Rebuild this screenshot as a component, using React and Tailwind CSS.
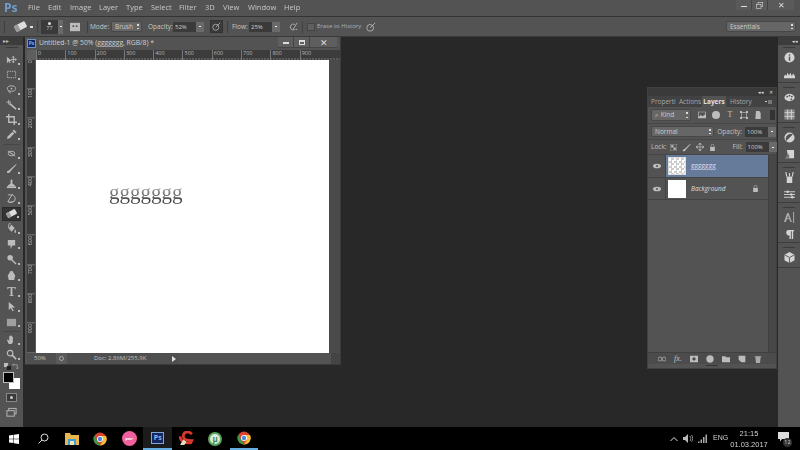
const I = ({ s = 11, children, cls = '' }) => (
  <svg width={s} height={s} viewBox="0 0 12 12" className={`shrink-0 ${cls}`} fill="#bcbcbc" stroke="none">{children}</svg>
);

const line = { fill: 'none', stroke: '#bcbcbc', strokeWidth: 1 };

const eraser = (
  <g transform="rotate(-28 6 6)">
    <rect x="0.500" y="3" width="11" height="6" rx="1.200" fill="#dedede" />
    <rect x="0.500" y="3" width="4" height="6" rx="1.200" fill="#9a9a9a" />
  </g>
);

const tools = [
  [<><path d="M1 3v7l2-2 1 2 1-.5-1-2h2.500z" /><path d="M8 3v6M5.500 6H11M8 2.500l-1 1h2zM8 9.500l-1-1h2zM11.500 6l-1-1v2z" {...line} /></>, 15],
  [<rect x="1.500" y="2.500" width="9" height="7" {...line} strokeDasharray="1.500 1" />, 15],
  [<><ellipse cx="6" cy="5" rx="4.500" ry="3" {...line} /><path d="M3 7c0 2 1 3 2 3" {...line} /><circle cx="6" cy="5" r="1" /></>, 15],
  [<><path d="M4 5l7 6" stroke="#bcbcbc" strokeWidth="1.800" /><path d="M3 1v5M.5 3.500h5" {...line} /></>, 15],
  [<path d="M3 0v9h9M0 3h9v9" {...line} strokeWidth="1.500" />, 15],
  [<><path d="M1 11l1-3 5-5 2 2-5 5z" /><path d="M7 2l1.500-1.500 3 3L10 5z" /></>, 15],
];

const tools1 = [
  [<><path d="M2 3l8 6" stroke="#bcbcbc" strokeWidth="1" /><ellipse cx="6" cy="6" rx="3.500" ry="2.500" {...line} /><circle cx="6" cy="6" r=".8" /></>, 15],
  [<><path d="M1 11c0-2 1-3 2.500-3L11 1l.5.5L5 9c0 1.500-2 2-4 2z" /></>, 15],
  [<><rect x="1" y="9" width="10" height="2" /><path d="M2 9c0-2 2-1.500 3-3V2.500a1 1 0 0 1 2 0V6c1 1.500 3 1 3 3z" /></>, 15],
  [<><path d="M2 2h3c4 0 5 2 5 4.500S8 10 5 10H3M7 1L2 9.500c2 1 5 1 7-1" {...line} /></>, 15],
];

const tools2 = [
  [<><path d="M3 6l3-4 3.500 3.500-3.500 4z" /><path d="M5 1.500a1 1 0 0 0-2 0V6" {...line} /><path d="M10 7c1 1.500 1.500 2.500.5 3.500S9 10 9.500 7z" /></>, 15],
  [<path d="M2 1h8v6H7l-2 4V7H2z" />, 16],
  [<><circle cx="4.500" cy="4" r="3" /><path d="M6 6l5 5" stroke="#bcbcbc" strokeWidth="1.500" /></>, 15],
  [<path d="M3 11L2 6l3-5h2l3 5-1 5z" />, 17],
  [<path d="M1.500 1h9v2.500h-.7L9 2H7v8l1.500.4v.6h-5v-.6L5 10V2H3l-.8 1.500H1.500z" />, 15],
  [<path d="M3 1l7 6H6.500l2 3.500-1.300.7-2-3.500L3 10z" />, 15],
  [<rect x="1" y="2" width="10" height="8" fill="#a0a0a0" />, 16],
];

const tools3 = [
  [<path d="M3 11L1 6.500l1-.5 1.500 1.500V2.500l1 0V5.500V1.500h1V5.500V2h1V5.500V3h1v5c0 1.500-1 3-2 3z" />, 15],
  [<><circle cx="4.500" cy="4.500" r="3" {...line} strokeWidth="1.300" /><path d="M6.500 6.500L11 11" stroke="#bcbcbc" strokeWidth="1.800" /></>, 15],
];

const dock = [
  [<><circle cx="6" cy="6" r="5.500" fill="#d4d4d4" /><rect x="5.200" y="2.500" width="1.600" height="1.500" fill="#535353" /><rect x="5.200" y="5" width="1.600" height="4.500" fill="#535353" /></>,
   <path d="M0 10V8l1.500-2 1 1.500L4 4l1.500 3L7 4l1.500 3.500L10 5l2 3v2z" fill="#d4d4d4" />],
  [<><ellipse cx="6" cy="6" rx="5.500" ry="4" fill="#d4d4d4" /><circle cx="3.500" cy="5" r="1" fill="#535353" /><circle cx="6" cy="4" r="1" fill="#535353" /><circle cx="8.500" cy="5" r="1" fill="#535353" /><circle cx="8" cy="8" r="1" fill="#535353" /></>,
   <><rect x=".5" y=".5" width="11" height="11" fill="#8a8a8a" /><path d="M4 .5v11M8 .5v11M.5 4h11M.5 8h11" stroke="#d4d4d4" strokeWidth="1" fill="none" /></>],
  [<><circle cx="6" cy="6" r="5.500" fill="#d4d4d4" /><path d="M2.500 9.800L9.800 2.500A5.500 5.500 0 0 0 2.500 9.800z" fill="#535353" /></>,
   <><path d="M3 1h8v9H5z" fill="#d4d4d4" /><path d="M1 11l3-6 2 2-1 4z" fill="#777" /></>],
  [<><path d="M3 5h6v7H3z" fill="#d4d4d4" /><path d="M3 5L2 0M6 5V1M9 5l1-5" stroke="#d4d4d4" strokeWidth="1.200" fill="none" /></>,
   <><path d="M0 3h12M0 6h12M0 9h12" stroke="#d4d4d4" strokeWidth="1" /><circle cx="4" cy="3" r="1.300" fill="#d4d4d4" /><circle cx="8" cy="6" r="1.300" fill="#d4d4d4" /><circle cx="9" cy="9" r="1.300" fill="#d4d4d4" /></>],
  [<><path d="M0 11L3.500 1h1.500L8.500 11H7L6 8H3l-1 3zM3.400 7h2.200L4.500 3.500z" fill="#b0b0b0" /><rect x="10" y="0" width="1" height="12" fill="#b0b0b0" /></>,
   <path d="M5 1h6v1.500H10V11H8.500V2.500H7.500V11H6V7a3 3 0 0 1-1-6z" fill="#d4d4d4" />],
  [<><path d="M6 0l5.500 3v6L6 12 .5 9V3z" fill="#d4d4d4" /><path d="M.5 3L6 6l5.500-3M6 6v6" stroke="#535353" fill="none" /></>],
];

const rulerTicks = 'bg-[repeating-linear-gradient(90deg,#777_0_1px,transparent_1px_3px)]';

function Tool({ icon, h, active }) {
  return (
    <div style={{ height: h }} className="relative flex items-center justify-center">
      <div className={`relative flex items-center justify-center w-[19px] h-[14px] ${active ? 'bg-[#343434] border border-[#2a2a2a]' : ''}`}>
        <I>{icon}</I>
        <span className="absolute right-[1px] bottom-[2px] w-[2px] h-[2px] bg-[#bcbcbc]" />
      </div>
    </div>
  );
}

function Toolbar() {
  return (
    <div className="w-[23px] shrink-0 bg-[#535353] flex flex-col">
      <div className="h-[8px] bg-[#3c3c3c] text-[6px] leading-[8px] pl-[3px] text-[#bbb]">▸▸</div>
      <div className="h-[1px] w-[12px] mx-auto mt-[2px] mb-[4px] bg-[#3a3a3a]" />
      <div className="flex flex-col">
        {tools.map(([icon, h], i) => <Tool key={i} icon={icon} h={h} />)}
        <div className="h-[1px] w-[17px] mx-auto my-[1.500px] bg-[#464646]" />
        {tools1.map(([icon, h], i) => <Tool key={i} icon={icon} h={h} />)}
        <Tool icon={eraser} h={15} active />
        {tools2.map(([icon, h], i) => <Tool key={i} icon={icon} h={h} />)}
        <div className="h-[1px] w-[17px] mx-auto my-[.500px] bg-[#464646]" />
        {tools3.map(([icon, h], i) => <Tool key={i} icon={icon} h={h} />)}
      </div>
      <div className="flex justify-between px-[4px] h-[9px] items-center">
        <I s={7}><rect x="0" y="0" width="7" height="7" /><rect x="5" y="5" width="7" height="7" fill="#222" /></I>
        <I s={7}><path d="M1 3h8v7M3 1L1 3l2 2M7 8l2 2 2-2" {...line} /></I>
      </div>
      <div className="relative h-[19px] mt-[1px]">
        <div className="absolute left-[9px] top-[6px] w-[11px] h-[11px] bg-white" />
        <div className="absolute left-[3px] top-0 w-[11px] h-[11px] bg-black border border-[#bbb]" />
      </div>
      <div className="mt-[2px] flex justify-center">
        <div className="w-[11px] h-[9px] bg-[#3a3a3a] border border-[#888] flex items-center justify-center">
          <div className="w-[3px] h-[3px] rounded-full bg-[#ccc]" />
        </div>
      </div>
      <div className="mt-[5px] flex justify-center">
        <I><rect x="3" y="1.500" width="8" height="6" {...line} /><rect x="1" y="4" width="8" height="6" fill="#535353" stroke="#bcbcbc" /></I>
      </div>
    </div>
  );
}

function DocWindow() {
  const labels = [0, 100, 200, 300, 400, 500, 600, 700, 800, 900];
  return (
    <div className="absolute left-[25px] top-0 w-[316px] h-[328px] bg-[#535353] border-r border-b border-[#3a3a3a] flex flex-col">
      <div className="h-[13px] shrink-0 flex items-center pl-[2px] relative">
        <div className="w-[9px] h-[9px] bg-[#14265e] border border-[#6f93cc] text-[5px] leading-[7px] text-center font-bold text-[#7fb0e8]">Ps</div>
        <span className="ml-[3px] text-[6.800px] text-[#d0d0d0] whitespace-nowrap">Untitled-1 @ 50% (ggggggg, RGB/8) *</span>
        <div className="absolute right-[3px] top-0 h-[11px] flex bg-[#5e5e5e] border-b border-[#444]">
          <div className="w-[16px] flex items-center justify-center border-r border-[#444]"><div className="w-[6px] h-[2px] mt-[2px] bg-[#ddd]" /></div>
          <div className="w-[16px] flex items-center justify-center border-r border-[#444]"><div className="w-[6px] h-[5px] border border-[#ddd] border-t-2" /></div>
          <div className="w-[27px] flex items-center justify-center text-[#ddd] text-[9px] leading-none">✕</div>
        </div>
      </div>
      <div className="flex flex-1 min-h-0 ml-[2px]">
        <div className="flex-1 flex flex-col min-w-0">
          <div className="h-[10px] flex shrink-0 bg-[#3c3c3c]">
            <div className="w-[9px] bg-[#5e5e5e] shrink-0" />
            <div className={`flex flex-1 relative ${rulerTicks} bg-[length:3px_2px] bg-bottom bg-repeat-x overflow-hidden`}>
              {labels.map((n) => (
                <div key={n} className="w-[29.300px] shrink-0 h-full border-l border-[#777] text-[5.500px] leading-[7px] pl-[1px] text-[#b8b8b8]">{n}</div>
              ))}
            </div>
          </div>
          <div className="flex h-[293px] shrink-0">
            <div className="w-[9px] bg-[#3c3c3c] shrink-0 flex flex-col overflow-hidden border-r border-[#5a5a5a]">
              {labels.map((n) => (
                <div key={n} className="h-[29.300px] shrink-0 border-t border-[#777] text-[5.500px] leading-[7px] text-[#b8b8b8] [writing-mode:vertical-rl] rotate-180 text-right">{n}</div>
              ))}
            </div>
            <div className="w-[293px] shrink-0 bg-white relative">
              <span className="absolute left-[73px] top-[120px] text-[21px] leading-[24px] font-['Liberation_Serif',serif] text-transparent bg-clip-text bg-[linear-gradient(180deg,#bbb_25%,#777_55%,#444_85%)]">ggggggg</span>
            </div>
            <div className="flex-1 bg-[#4a4a4a]" />
          </div>
          <div className="h-[11px] flex items-center text-[6px] text-[#c0c0c0] bg-[#4f4f4f]">
            <span className="w-[27px] pl-[7px]">50%</span>
            <div className="w-[11px] h-[11px] ml-[2px] bg-[#5a5a5a] flex items-center justify-center"><div className="w-[5px] h-[5px] rounded-full border border-[#aaa]" /></div>
            <span className="ml-[27px] w-[78px] whitespace-nowrap">Doc: 2,86M/255,9K</span>
            <span className="w-0 h-0 border-y-[3px] border-y-transparent border-l-[4px] border-l-[#e0e0e0]" />
            <div className="flex-1 h-full ml-[3px] bg-[#535353]" />
            <div className="w-[9px] h-full bg-[#444]" />
          </div>
        </div>
      </div>
    </div>
  );
}

const Field = ({ w, v }) => (
  <div className="flex h-[10px]">
    <div style={{ width: w }} className="bg-[#3a3a3a] text-[6px] leading-[10px] px-[2px] text-[#cfcfcf]">{v}</div>
    <div className="w-[8px] bg-[#6a6a6a] flex items-center justify-center"><div className="w-[2px] h-[1px] bg-[#eee]" /></div>
  </div>
);

const Select = ({ cls, v }) => (
  <div className={`relative h-[11px] bg-[#666] rounded-[2px] border border-[#474747] leading-[9px] pl-[3px] text-[#ccc] ${cls}`}>
    {v}
    <span className="absolute right-[2px] top-[2px] w-[2px] h-[1.500px] bg-[#ddd]" />
    <span className="absolute right-[2px] bottom-[2px] w-[2px] h-[1.500px] bg-[#ddd]" />
  </div>
);

const Eye = () => <I s={8}><ellipse cx="6" cy="6" rx="6" ry="3.500" /><circle cx="6" cy="6" r="1.500" fill="#535353" /></I>;

function LayersPanel() {
  const cell = 'w-[16px] shrink-0 flex justify-center';
  return (
    <div className="absolute left-[647px] top-[50px] w-[130px] h-[282px] bg-[#535353] border border-[#404040] flex flex-col text-[#c4c4c4]">
      <div className="h-[8px] shrink-0 bg-[#3a3a3a] flex justify-end items-center gap-[5px] pr-[3px] text-[5px] leading-none text-[#ddd]"><span>◂◂</span><span>✕</span></div>
      <div className="h-[11px] shrink-0 flex bg-[#424242] text-[6.500px] leading-[11px]">
        <div className="w-[28px] pl-[3px] overflow-hidden whitespace-nowrap text-[#a8a8a8]">Properties</div>
        <div className="w-[26px] pl-[3px] text-[#a8a8a8]">Actions</div>
        <div className="w-[24px] bg-[#535353] text-center font-bold text-[#e0e0e0]">Layers</div>
        <div className="w-[28px] pl-[4px] text-[#a8a8a8]">History</div>
        <div className="flex-1 flex justify-end items-center gap-[1px] pr-[4px]"><div className="w-[2px] h-[1px] bg-[#ccc]" /><div className="w-[4px] h-[4px] bg-[#777]" /></div>
      </div>
      <div className="h-[16px] shrink-0 flex items-center pl-[3px]">
        <Select cls="w-[40px] h-[12px] text-[6.500px] !leading-[10px]" v="⌕ Kind" />
        <div className="flex items-center ml-[3px]">
          <div className={cell}><I s={8}><path fillRule="evenodd" d="M0 1h12v10H0zM1 2v7l3-3 3 2 4-3V2z" /></I></div>
          <div className={`${cell} -ml-[2px]`}><I s={8}><circle cx="6" cy="6" r="6" /></I></div>
          <div className={`${cell} -ml-[2px] text-[8px] leading-none font-['Liberation_Serif',serif]`}>T</div>
          <div className={`${cell} -ml-[2px]`}><I s={8}><rect x="2" y="2" width="8" height="8" {...line} /><path d="M0 0h3v3H0zM9 0h3v3H9zM0 9h3v3H0zM9 9h3v3H9z" /></I></div>
          <div className={`${cell} -ml-[2px]`}><I s={8}><path d="M3 0h5l2 3v9H2z" /></I></div>
        </div>
        <div className="w-[5px] h-[10px] bg-[#333] ml-[4px]" />
      </div>
      <div className="h-[16px] shrink-0 flex items-center pl-[3px] border-t border-[#464646]">
        <Select cls="w-[65px] text-[6.500px]" v="Normal" />
        <span className="ml-[3px] mr-[3px] text-[6.500px]">Opacity:</span>
        <Field w={23} v="100%" />
      </div>
      <div className="h-[16px] shrink-0 flex items-center pl-[3px] border-y border-[#464646] text-[6.500px]">
        <span>Lock:</span>
        <div className="flex gap-[5px] ml-[3px] items-center">
          <I s={7}><rect x="0" y="0" width="12" height="12" {...line} /><rect x="2" y="2" width="4" height="4" /><rect x="6" y="6" width="4" height="4" /></I>
          <I s={9}><path d="M1 11c0-2 1-3 2.500-3L11 1l.5.5L5 9c0 1.500-2 2-4 2z" /></I>
          <I s={8}><path d="M6 0v12M0 6h12M6 0L4 2h4zM6 12l-2-2h4zM0 6l2-2v4zM12 6l-2-2v4z" {...line} /></I>
          <I s={7}><rect x="2" y="5" width="8" height="7" /><path d="M3.500 5V3a2.500 2.500 0 0 1 5 0v2" {...line} /></I>
        </div>
        <span className="ml-[17px] mr-[3px]">Fill:</span>
        <Field w={23} v="100%" />
      </div>
      <div className="flex flex-1 min-h-0">
        <div className="flex-1 flex flex-col">
          <div className="h-[23px] flex bg-[#667b9a] border-b border-[#444]">
            <div className="w-[18px] flex items-center justify-center bg-[#535353] border-r border-[#444]"><Eye /></div>
            <div className="w-[18px] h-[18px] ml-[2px] my-auto border border-[#ddd] bg-[repeating-conic-gradient(#ccc_0_25%,#fff_0_50%)] bg-[length:5px_5px]" />
            <span className="ml-[5px] my-auto text-[6.500px] text-[#dde]">ggggggg</span>
          </div>
          <div className="h-[22px] flex items-center border-b border-[#444]">
            <div className="w-[18px] h-full flex items-center justify-center border-r border-[#444]"><Eye /></div>
            <div className="w-[18px] h-[18px] ml-[2px] bg-white" />
            <span className="ml-[5px] text-[6.500px] italic text-[#ddd]">Background</span>
            <I s={7} cls="ml-[26px]"><rect x="2" y="5" width="8" height="7" /><path d="M3.500 5V3a2.500 2.500 0 0 1 5 0v2" {...line} /></I>
          </div>
        </div>
        <div className="w-[8px] bg-[#474747] border-l border-[#404040]" />
      </div>
      <div className="h-[12px] shrink-0 flex items-center pl-[6px] bg-[#4c4c4c] border-t border-[#404040]">
        <div className={cell}><I s={8}><rect x="0" y="3" width="6" height="6" rx="3" {...line} /><rect x="6" y="3" width="6" height="6" rx="3" {...line} /></I></div>
        <div className={`${cell} font-['Liberation_Serif',serif] italic text-[8px] leading-none`}>fx.</div>
        <div className={cell}><I s={8}><path fillRule="evenodd" d="M0 1h12v10H0zM6 3.500a2.500 2.500 0 1 0 .001 0z" /></I></div>
        <div className={cell}><I s={8}><circle cx="6" cy="6" r="5.500" /></I></div>
        <div className={cell}><I s={8}><path d="M0 2h5l1 1.500h6V11H0z" /></I></div>
        <div className={cell}><I s={8}><path d="M1 1h10v10H5L1 7z" /></I></div>
        <div className={cell}><I s={8}><path d="M2 3h8l-1 9H3zM1 1.500h10v1H1z" fill="#aaa" /></I></div>
      </div>
      <div className="h-[4px] shrink-0 bg-[#535353] flex justify-center"><div className="w-[12px] h-[1px] bg-[#333] mt-[1px]" /></div>
    </div>
  );
}

function Dock() {
  return (
    <div className="w-[22px] shrink-0 bg-[#535353] flex flex-col">
      <div className="h-[8px] bg-[#3c3c3c] text-[5px] leading-[8px] text-right pr-[2px] text-[#ddd]">◂◂</div>
      {dock.map((group, i) => (
        <div key={i} className={`flex flex-col items-center border-b border-[#3e3e3e] ${i === 0 ? 'h-[38px] pt-[2px]' : 'pt-[4px]'} ${i > 0 && group.length === 2 ? 'h-[40px]' : ''} ${group.length === 1 ? 'h-[25px]' : ''}`}>
          <div className="w-[12px] h-[1px] bg-[#3a3a3a] mb-[4px]" />
          <div className="flex flex-col gap-[6px]">
            {group.map((icon, j) => <I key={j}>{icon}</I>)}
          </div>
        </div>
      ))}
    </div>
  );
}

const Chrome = () => (
  <svg width="14" height="14" viewBox="0 0 14 14" className="shrink-0">
    <circle cx="7" cy="7" r="6.500" fill="#d9432f" />
    <path d="M1.400 3.800L4.300 9 7 13.500A6.500 6.500 0 0 1 1.400 3.800z" fill="#3a9a46" />
    <path d="M7 4h6a6.500 6.500 0 0 1-6 9.500L9.800 9z" fill="#f2c031" />
    <circle cx="7" cy="7" r="3" fill="#fff" />
    <circle cx="7" cy="7" r="2.200" fill="#4a88e0" />
  </svg>
);

function Taskbar() {
  const cell = 'w-[28.700px] h-full shrink-0 flex items-center justify-center';
  return (
    <div className="h-[23px] shrink-0 bg-black flex items-center relative text-[#d0d0d0]">
      <div className={cell}>
        <svg width="10" height="10" viewBox="0 0 10 10" fill="#fff"><path d="M0 1.500L4.500.8v3.900H0zM5 .7L10 0v4.700H5zM0 5.200h4.500v3.900L0 8.500zM5 5.200h5V10l-5-.7z" /></svg>
      </div>
      <div className={cell}>
        <svg width="11" height="11" viewBox="0 0 11 11" fill="none" stroke="#ddd"><circle cx="6.500" cy="4.500" r="3.500" /><path d="M4 7l-3.500 3.500" /></svg>
      </div>
      <div className={cell}>
        <svg width="14" height="12" viewBox="0 0 14 12"><path d="M0 0h5l1 2h8v10H0z" fill="#e6b84c" /><rect x="3" y="6" width="8" height="6" fill="#3f9ad8" /><rect x="5" y="8" width="4" height="4" fill="#f4e3a6" /></svg>
      </div>
      <div className={cell}><Chrome /></div>
      <div className={cell}>
        <div className="w-[15px] h-[15px] rounded-full bg-[#f0609c] text-[4px] leading-[15px] text-center text-white font-bold">pwr</div>
      </div>
      <div className={`${cell} bg-[#1c1c1c] border-b-2 border-[#66aee0]`}>
        <div className="w-[13px] h-[12px] bg-[#14265e] border border-[#7fa6dc] text-[7px] leading-[10px] text-center font-bold text-[#8dbcf0]">Ps</div>
      </div>
      <div className={cell}>
        <svg width="15" height="15" viewBox="0 0 14 14"><path d="M12 3C9-.5 4 .5 4 5c0 3 3 4 8 4l-1 2c-6 1-10-2-10-6" fill="none" stroke="#d9382c" strokeWidth="2.500" /><path d="M1 13l3-5 3 2-2 3z" fill="#e8dcc0" /></svg>
      </div>
      <div className={cell}>
        <div className="w-[14px] h-[14px] rounded-full bg-[#dfe8df] border-2 border-[#58a55c] text-[8px] leading-[10px] text-center font-bold text-[#3a8a44]">µ</div>
      </div>
      <div className={`${cell} border-b-2 border-[#66aee0]`}><Chrome /></div>

      <div className="ml-auto flex items-center h-full">
        <svg width="8" height="6" viewBox="0 0 8 6" fill="none" stroke="#ddd"><path d="M.5 5L4 1.500 7.500 5" /></svg>
        <svg width="10" height="9" viewBox="0 0 10 9" className="ml-[5px]"><path d="M0 3h2l3-3v9L2 6H0z" fill="#bbb" /><path d="M7 2c1 1.500 1 3.500 0 5M8.500 1c1.500 2 1.500 5 0 7" stroke="#888" fill="none" /></svg>
        <svg width="9" height="9" viewBox="0 0 9 9" fill="#aaa" className="ml-[5px]"><path d="M0 9V7.500h1.500V9zM2.500 9V5.500H4V9zM5 9V3h1.500v6zM7.500 9V.5H9V9z" /></svg>
        <span className="ml-[6px] text-[7px] w-[16px] font-['Liberation_Sans',sans-serif]">ENG</span>
        <div className="w-[40px] text-center text-[7.500px] leading-[11px] font-['Liberation_Sans',sans-serif]">
          <div>21:15</div>
          <div>01.03.2017</div>
        </div>
        <div className="relative w-[20px] h-full ml-[4px] mr-[7px] flex items-center justify-center">
          <svg width="11" height="10" viewBox="0 0 11 10" fill="#ddd" className="-mt-[3px]"><path d="M0 0h11v7H4L2 9.500V7H0z" /></svg>
          <span className="absolute right-[1px] bottom-[3px] w-[9px] h-[9px] rounded-full bg-[#333] text-[5.500px] leading-[9px] text-center">12</span>
        </div>
      </div>
    </div>
  );
}

export default function App() {
  return (
    <div className="w-[800px] h-[450px] overflow-hidden bg-[#3a3a3a]">
      <div className="w-[800px] h-[450px] flex flex-col bg-[#282828] blur-[0.350px] font-['Open_Sans','Liberation_Sans',sans-serif] text-[#c8c8c8]">
        {/* menu bar */}
        <div className="h-[17px] shrink-0 bg-[#535353] border-b border-[#333] flex items-center relative">
          <span className="ml-[4px] w-[24px] text-[12px] leading-none font-bold text-[#6f9fcc]">Ps</span>
          <div className="flex text-[7.500px] text-[#c8c8c8]">
            <span className="w-[20px]">File</span>
            <span className="w-[22px]">Edit</span>
            <span className="w-[29px]">Image</span>
            <span className="w-[27px]">Layer</span>
            <span className="w-[25px]">Type</span>
            <span className="w-[28px]">Select</span>
            <span className="w-[26px]">Filter</span>
            <span className="w-[18px]">3D</span>
            <span className="w-[25px]">View</span>
            <span className="w-[36px]">Window</span>
            <span>Help</span>
          </div>
          <div className="absolute right-[6px] top-0 h-[10px] flex bg-[#5a5a5a] text-[#ddd]">
            <div className="w-[16px] flex items-center justify-center border-r border-[#454545]"><div className="w-[6px] h-[1px] mt-[3px] bg-[#ddd]" /></div>
            <div className="w-[16px] flex items-center justify-center border-r border-[#454545]">
              <I s={7}><rect x="3.500" y=".5" width="8" height="7" fill="none" stroke="#ddd" /><rect x=".5" y="4" width="8" height="7" fill="#5a5a5a" stroke="#ddd" /></I>
            </div>
            <div className="w-[26px] flex items-center justify-center text-[8px] leading-none">✕</div>
          </div>
        </div>

        {/* options bar */}
        <div className="h-[20px] shrink-0 bg-[#535353] border-b border-[#3a3a3a] flex items-center text-[6.500px]">
          <div className="w-[1px] h-[12px] bg-[#3f3f3f] ml-[4px]" />
          <I s={13} cls="ml-[9px]">{eraser}</I>
          <div className="ml-[3px] w-[3px] h-[2px] bg-[#ddd]" />
          <div className="w-[1px] h-[12px] bg-[#3f3f3f] ml-[4px]" />
          <div className="ml-[3px] flex h-[14px]">
            <div className="w-[17px] bg-[#3a3a3a] flex flex-col items-center justify-center text-[5.500px] leading-[7px]">
              <div className="w-[3px] h-[3px] rounded-full bg-[#ddd]" />
              <span>77</span>
            </div>
            <div className="w-[5px] bg-[#6a6a6a] flex items-center justify-center"><div className="w-[2px] h-[1px] bg-[#eee]" /></div>
          </div>
          <I s={10} cls="ml-[7px]"><rect x="0" y="1" width="12" height="10" /><rect x="3" y="4" width="2" height="2" fill="#535353" /><rect x="7" y="4" width="2" height="2" fill="#535353" /></I>
          <div className="w-[1px] h-[12px] bg-[#3f3f3f] ml-[7px]" />
          <span className="ml-[2px] w-[17px]">Mode:</span>
          <Select cls="ml-[4px] w-[31px]" v="Brush" />
          <span className="ml-[6px] w-[24px]">Opacity:</span>
          <div className="ml-[1px]"><Field w={23} v="52%" /></div>
          <div className="ml-[6px] w-[13px] h-[13px] bg-[#3a3a3a] border border-[#333] flex items-center justify-center"><I s={9}><circle cx="5" cy="7" r="4" {...line} /><path d="M5 7l6-6" stroke="#bcbcbc" /></I></div>
          <div className="w-[1px] h-[12px] bg-[#3f3f3f] ml-[4px]" />
          <span className="ml-[4px] w-[16px]">Flow:</span>
          <div className="ml-[1px]"><Field w={23} v="25%" /></div>
          <I s={10} cls="ml-[8px]"><path d="M8 3a3.500 3.500 0 1 0 0 6M6 9l5-8M9 9h2" {...line} /></I>
          <div className="w-[1px] h-[12px] bg-[#3f3f3f] ml-[4px]" />
          <div className="ml-[4px] w-[8px] h-[8px] bg-[#606060] border border-[#444]" />
          <span className="ml-[2px] w-[44px] whitespace-nowrap text-[6px] text-[#b0b0b0]">Erase to History</span>
          <I s={10} cls="ml-[5px]"><circle cx="5" cy="7" r="4" {...line} /><path d="M5 7l6-6" stroke="#bcbcbc" /></I>
          <Select cls="ml-auto mr-[4px] w-[70px]" v="Essentials" />
        </div>

        {/* workspace */}
        <div className="flex-1 min-h-0 flex relative">
          <Toolbar />
          <div className="flex-1" />
          <Dock />
          <DocWindow />
          <LayersPanel />
        </div>

        <Taskbar />
      </div>
    </div>
  );
}
